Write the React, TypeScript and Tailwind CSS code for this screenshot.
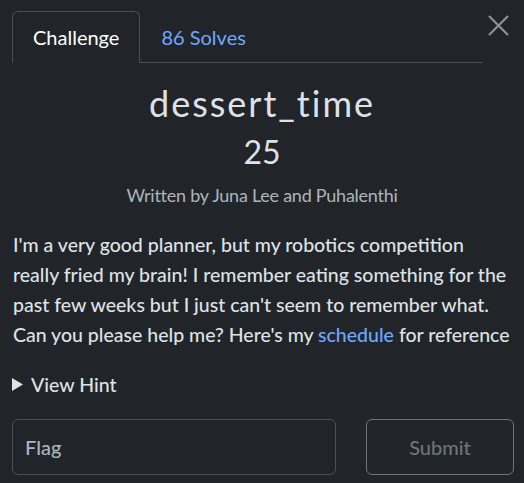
import React from 'react';

export default function App() {
    return (
        <div className="w-[524px] h-[483px] bg-[#212529] text-[#dee2e6] font-['Lato','Noto_Sans',sans-serif] overflow-hidden">
            <div className="flex items-start pt-[11px] pl-3 pr-[10px]">
                <ul className="flex flex-1 border-b border-[#495057]">
                    <li className="-mb-px px-5 h-[52px] flex items-center border border-[#495057] border-b-[#212529] rounded-t-md text-[20px] text-white">
                        Challenge
                    </li>
                    <li className="-mb-px px-[21px] h-[52px] flex items-center text-[20px] text-[#6ea8fe]">
                        86 Solves
                    </li>
                </ul>
                <button className="w-[31px] h-[28px] flex items-center justify-center" aria-label="Close">
                    <svg width="21" height="21" viewBox="0 0 21 21" stroke="#909294" strokeWidth="2.2">
                        <line x1="1" y1="1" x2="20" y2="20" />
                        <line x1="20" y1="1" x2="1" y2="20" />
                    </svg>
                </button>
            </div>

            <div className="flex flex-col items-center mt-[19px]">
                <h2 className="text-[36px] leading-[1.2] tracking-[2px]">dessert_time</h2>
                <h3 className="text-[32px] leading-[1.2] mt-[8px]">25</h3>
                <span className="text-[18px] leading-[27px] tracking-[-0.25px] text-[#adb5bd] mt-[10px]">
                    Written by Juna Lee and Puhalenthi
                </span>
            </div>

            <div className="pl-[13px] pr-[4px] mt-[21px]">
                <p className="text-[19.5px] leading-[30px] font-medium pr-[6px]">
                    I'm a very good planner, but my robotics competition really fried my brain! I remember eating
                    something for the past few weeks but I just can't seem to remember what. Can you please help me?
                    Here's my <a className="text-[#6ea8fe]">schedule</a> for reference
                </p>

                <div className="flex items-center gap-2 mt-[20px] text-[19.5px] leading-[30px] font-medium -ml-px">
                    <svg width="11" height="13" viewBox="0 0 11 13" fill="#dee2e6">
                        <polygon points="0,0 11,6.5 0,13" />
                    </svg>
                    <span>View Hint</span>
                </div>

                <div className="flex gap-[30px] mt-[19.5px] pr-[6px] -ml-px">
                    <div className="w-[324px] h-[56px] border border-[#495057] rounded-md flex items-center px-3 text-[20px] font-medium text-[#adb5bd]">
                        Flag
                    </div>
                    <button className="w-[148px] h-[56px] border border-[#6c757d] rounded-md text-[20px] font-medium text-[#6c757d]">
                        Submit
                    </button>
                </div>
            </div>
        </div>
    );
}
